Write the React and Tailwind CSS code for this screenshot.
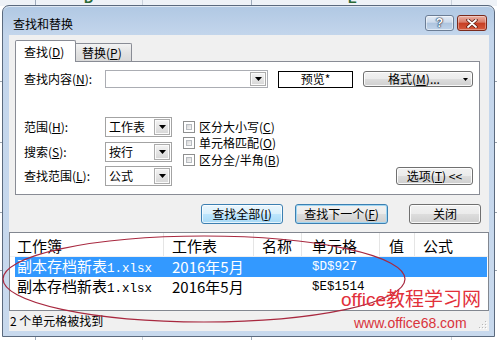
import React from "react";

const btnGrey =
  "border border-[#707070] rounded-[3px] bg-[linear-gradient(to_bottom,#f2f2f2,#ebebeb_50%,#dddddd_50%,#cfcfcf)] shadow-[inset_0_0_0_1px_rgba(255,255,255,0.85)] flex items-center justify-center";

function Caret() {
  return (
    <svg width="7" height="4" viewBox="0 0 7 4">
      <path d="M0 0H7L3.5 4Z" fill="#000" />
    </svg>
  );
}

function DropBtn() {
  return (
    <div className="w-[16px] my-[1px] mr-[1px] border border-[#acacac] bg-[linear-gradient(to_bottom,#f4f4f4,#d6d6d6)] shadow-[inset_0_0_0_1px_#fbfbfb] flex items-center justify-center">
      <Caret />
    </div>
  );
}

function Combo({ children }) {
  return (
    <div className="w-[67px] h-[20px] border border-[#a3a3a3] bg-white flex">
      <div className="flex-1 pl-[3px] flex items-center">{children}</div>
      <DropBtn />
    </div>
  );
}

function Check({ children }) {
  return (
    <div className="flex items-center">
      <div className="w-[12px] h-[12px] border border-[#8e8f8f] bg-white p-[2px]">
        <div className="w-full h-full border border-[#b8bcc1] bg-[linear-gradient(135deg,#d6d6d6,#f7f7f7)]" />
      </div>
      <div className="ml-[4px]">{children}</div>
    </div>
  );
}

export default function App() {
  return (
    <div className="relative w-[497px] h-[340px] overflow-hidden bg-white pt-[5px] pl-[2px] font-['Noto_Sans_CJK_SC','Noto_Sans',sans-serif] text-[12px] leading-[12px] text-black">
      {/* spreadsheet behind */}
      <div className="absolute inset-0 z-0">
        <div className="absolute left-0 top-0 w-full h-[6px] bg-[#eef2f7]" />
        <div className="absolute left-[35px] top-0 w-px h-full bg-[#9eabbb]" />
        <div className="absolute left-[142px] top-0 w-px h-full bg-[#c9d1db]" />
        <div className="absolute left-[251px] top-0 w-px h-full bg-[#9eabbb]" />
        <div className="absolute left-[451px] top-0 w-px h-full bg-[#c9d1db]" />
        <div className="absolute left-[84px] top-[-8px] text-[13px] leading-[13px] font-bold text-[#2a6a35] font-['Liberation_Sans',sans-serif]">D</div>
        <div className="absolute left-[348px] top-[-8px] text-[13px] leading-[13px] font-bold text-[#2a6a35] font-['Liberation_Sans',sans-serif]">E</div>
        <div className="absolute left-0 top-[81px] w-full h-px bg-[#9aa3ad]" />
        <div className="absolute left-0 top-[142px] w-full h-px bg-[#9aa3ad]" />
        <div className="absolute left-0 top-[212px] w-full h-px bg-[#9aa3ad]" />
        <div className="absolute left-0 top-[270px] w-full h-px bg-[#9aa3ad]" />
      </div>

      {/* dialog window */}
      <div className="relative z-10 w-[493px] h-[332px] rounded-t-[7px] border border-[#5b6a7e] bg-[linear-gradient(to_bottom,#b0c8e3,#c4d6ec_30px,#c8d9ed)] shadow-[inset_0_1px_0_rgba(255,255,255,0.6)] flex flex-col">
        {/* title bar */}
        <div className="h-[29px] shrink-0 flex items-start">
          <div className="ml-[10px] mt-[12px] text-[12px] leading-[12px]">查找和替换</div>
          <div className="ml-auto mr-[7px] mt-[9px] flex gap-[3px]">
            <div className="w-[29px] h-[16px] rounded-[3px] border border-[#6b7d95] bg-[linear-gradient(to_bottom,#e2ebf5,#cddbec_45%,#aec4de_50%,#c0d4ea)] shadow-[inset_0_0_0_1px_rgba(255,255,255,0.5)] flex items-center justify-center">
              <span className="font-['Liberation_Sans',sans-serif] font-bold text-[12px] leading-[12px] text-white [text-shadow:0_0_1px_#1d2f4a,0_0_1px_#1d2f4a,0_0_2px_#1d2f4a]">?</span>
            </div>
            <div className="w-[30px] h-[16px] rounded-[3px] border border-[#7a2a1c] bg-[linear-gradient(to_bottom,#eab0a3,#d97a66_45%,#c63d22_50%,#d65b3e)] shadow-[inset_0_0_0_1px_rgba(255,255,255,0.35)] flex items-center justify-center">
              <svg width="12" height="9" viewBox="0 0 12 9">
                <path d="M2 1L10 8M10 1L2 8" stroke="#5b1a10" strokeWidth="3.4" strokeLinecap="round" />
                <path d="M2 1L10 8M10 1L2 8" stroke="#ffffff" strokeWidth="1.8" strokeLinecap="round" />
              </svg>
            </div>
          </div>
        </div>

        {/* client area */}
        <div className="ml-[6px] w-[480px] h-[296px] bg-[#f0f0f0] flex flex-col">
          {/* tabs */}
          <div className="h-[26px] pt-[5px] pl-[6px] flex items-start shrink-0">
            <div className="relative z-10 w-[61px] h-[22px] border-x border-t border-[#898c95] rounded-t-[2px] bg-white pl-[8px] flex items-center">
              查找(<span className="underline">D</span>)
            </div>
            <div className="mt-[3px] w-[56px] h-[18px] border-r border-t border-[#898c95] rounded-tr-[2px] bg-[linear-gradient(to_bottom,#f3f3f3,#e3e3e3_50%,#d9d9d9)] pl-[6px] flex items-center">
              替换(<span className="underline">P</span>)
            </div>
          </div>

          {/* tab panel */}
          <div className="ml-[6px] w-[465px] h-[134px] shrink-0 border border-[#898c95] bg-white flex flex-col">
            <div className="mt-[8px] h-[18px] flex items-center">
              <div className="w-[89px] pl-[8px]">
                查找内容(<span className="underline">N</span>):
              </div>
              <div className="w-[163px] h-[18px] border border-[#abadb3] bg-white flex justify-end">
                <DropBtn />
              </div>
              <div className="ml-[10px] w-[75px] h-[17px] border border-black bg-white flex items-center justify-center">
                预览*
              </div>
              <div className={"ml-[10px] w-[110px] h-[16px] relative " + btnGrey}>
                <span className="mr-[8px]">
                  格式(<span className="underline">M</span>)...
                </span>
                <span className="absolute right-[4px] top-[6px]">
                  <svg width="5" height="3" viewBox="0 0 5 3">
                    <path d="M0 0H5L2.5 3Z" fill="#000" />
                  </svg>
                </span>
              </div>
            </div>

            <div className="mt-[29px] flex pr-[6px]">
              <div className="flex flex-col">
                <div className="h-[20px] flex items-center">
                  <div className="w-[89px] pl-[8px]">
                    范围(<span className="underline">H</span>):
                  </div>
                  <Combo>工作表</Combo>
                </div>
                <div className="mt-[5px] h-[20px] flex items-center">
                  <div className="w-[89px] pl-[8px]">
                    搜索(<span className="underline">S</span>):
                  </div>
                  <Combo>按行</Combo>
                </div>
                <div className="mt-[4px] h-[20px] flex items-center">
                  <div className="w-[89px] pl-[8px]">
                    查找范围(<span className="underline">L</span>):
                  </div>
                  <Combo>公式</Combo>
                </div>
              </div>

              <div className="ml-[11px] mt-[1px] flex flex-col">
                <div className="h-[17px] flex items-center">
                  <Check>
                    区分大小写(<span className="underline">C</span>)
                  </Check>
                </div>
                <div className="h-[16px] flex items-center">
                  <Check>
                    单元格匹配(<span className="underline">O</span>)
                  </Check>
                </div>
                <div className="h-[17px] flex items-center">
                  <Check>
                    区分全/半角(<span className="underline">B</span>)
                  </Check>
                </div>
              </div>

              <div className={"ml-auto self-end mb-[1px] w-[77px] h-[18px] " + btnGrey}>
                选项(<span className="underline">T</span>)&nbsp;&lt;&lt;
              </div>
            </div>
          </div>

          {/* action buttons */}
          <div className="mt-[9px] h-[20px] shrink-0 flex justify-end pr-[8px]">
            <div className="w-[82px] h-[20px] border border-[#3c7fb1] rounded-[3px] bg-[linear-gradient(to_bottom,#eaf6fd,#d9f0fc_50%,#bee6fd_50%,#a7d9f5)] shadow-[inset_0_0_0_1px_rgba(255,255,255,0.7)] flex items-center justify-center">
              查找全部(<span className="underline">I</span>)
            </div>
            <div className="ml-[12px] w-[93px] h-[20px] border border-[#3c7fb1] rounded-[3px] bg-[linear-gradient(to_bottom,#f2f2f2,#ebebeb_50%,#dddddd_50%,#cfcfcf)] shadow-[inset_0_0_0_1px_#9fd6f3] flex items-center justify-center">
              查找下一个(<span className="underline">F</span>)
            </div>
            <div className={"ml-[21px] w-[72px] h-[20px] " + btnGrey}>关闭</div>
          </div>

          {/* results list */}
          <div className="mt-[8px] h-[79px] shrink-0 border border-[#828790] bg-white flex flex-col">
            <div className="h-[24px] flex text-[15px] leading-[15px] border-b border-[#f0f0f0]">
              <div className="w-[154px] pl-[7px] pt-[5px] border-r border-[#e5e5e5]">工作簿</div>
              <div className="w-[90px] pl-[8px] pt-[5px] border-r border-[#e5e5e5]">工作表</div>
              <div className="w-[48px] pl-[8px] pt-[5px] border-r border-[#e5e5e5]">名称</div>
              <div className="w-[78px] pl-[10px] pt-[5px] border-r border-[#e5e5e5]">单元格</div>
              <div className="w-[35px] pl-[9px] pt-[5px] border-r border-[#e5e5e5]">值</div>
              <div className="flex-1 pl-[8px] pt-[5px]">公式</div>
            </div>
            <div className="ml-[5px] mr-[1px] h-[20px] bg-[#3399ff] text-white flex items-center text-[15px] leading-[16px]">
              <div className="w-[149px] pl-[2px] whitespace-nowrap">
                副本存档新表<span className="font-['Liberation_Mono',monospace] text-[12.5px]">1.xlsx</span>
              </div>
              <div className="w-[90px] pl-[8px]">2016年5月</div>
              <div className="w-[48px]" />
              <div className="w-[78px] pl-[10px] font-['Liberation_Mono',monospace] text-[12.5px]">$D$927</div>
            </div>
            <div className="ml-[5px] mr-[1px] h-[20px] flex items-center text-[15px] leading-[16px]">
              <div className="w-[149px] pl-[2px] whitespace-nowrap">
                副本存档新表<span className="font-['Liberation_Mono',monospace] text-[12.5px]">1.xlsx</span>
              </div>
              <div className="w-[90px] pl-[8px]">2016年5月</div>
              <div className="w-[48px]" />
              <div className="w-[78px] pl-[10px] font-['Liberation_Mono',monospace] text-[12.5px]">$E$1514</div>
            </div>
          </div>

          {/* status bar */}
          <div className="h-[20px] shrink-0 flex items-center pl-[1px] pr-[2px]">
            <div>2 个单元格被找到</div>
            <div className="ml-auto self-end mb-[2px]">
              <svg width="8" height="8" viewBox="0 0 8 8">
                <rect x="6" y="0" width="1" height="1" fill="#b8b8b8" />
                <rect x="3" y="3" width="1" height="1" fill="#b8b8b8" />
                <rect x="6" y="3" width="1" height="1" fill="#b8b8b8" />
                <rect x="0" y="6" width="1" height="1" fill="#b8b8b8" />
                <rect x="3" y="6" width="1" height="1" fill="#b8b8b8" />
                <rect x="6" y="6" width="1" height="1" fill="#b8b8b8" />
                <rect x="7" y="1" width="1" height="1" fill="#ffffff" />
                <rect x="4" y="4" width="1" height="1" fill="#ffffff" />
                <rect x="7" y="4" width="1" height="1" fill="#ffffff" />
                <rect x="1" y="7" width="1" height="1" fill="#ffffff" />
                <rect x="4" y="7" width="1" height="1" fill="#ffffff" />
                <rect x="7" y="7" width="1" height="1" fill="#ffffff" />
              </svg>
            </div>
          </div>
        </div>
      </div>

      {/* red annotation ellipse */}
      <svg className="absolute left-0 top-0 z-20 pointer-events-none" width="497" height="340" viewBox="0 0 497 340">
        <ellipse cx="204" cy="279" rx="201" ry="43" fill="none" stroke="#a8283f" strokeWidth="1.2" />
      </svg>

      {/* watermark */}
      <div className="absolute z-30 left-[341px] top-[291px] text-[19px] leading-[17px] text-[#e2303a] font-['Liberation_Sans','Noto_Sans_CJK_SC',sans-serif] whitespace-nowrap">
        office教程学习网
      </div>
      <div className="absolute z-30 left-[354px] top-[316px] text-[14px] leading-[14px] text-[#d9343c] font-['Liberation_Sans',sans-serif] whitespace-nowrap">
        www.office68.com
      </div>
    </div>
  );
}
